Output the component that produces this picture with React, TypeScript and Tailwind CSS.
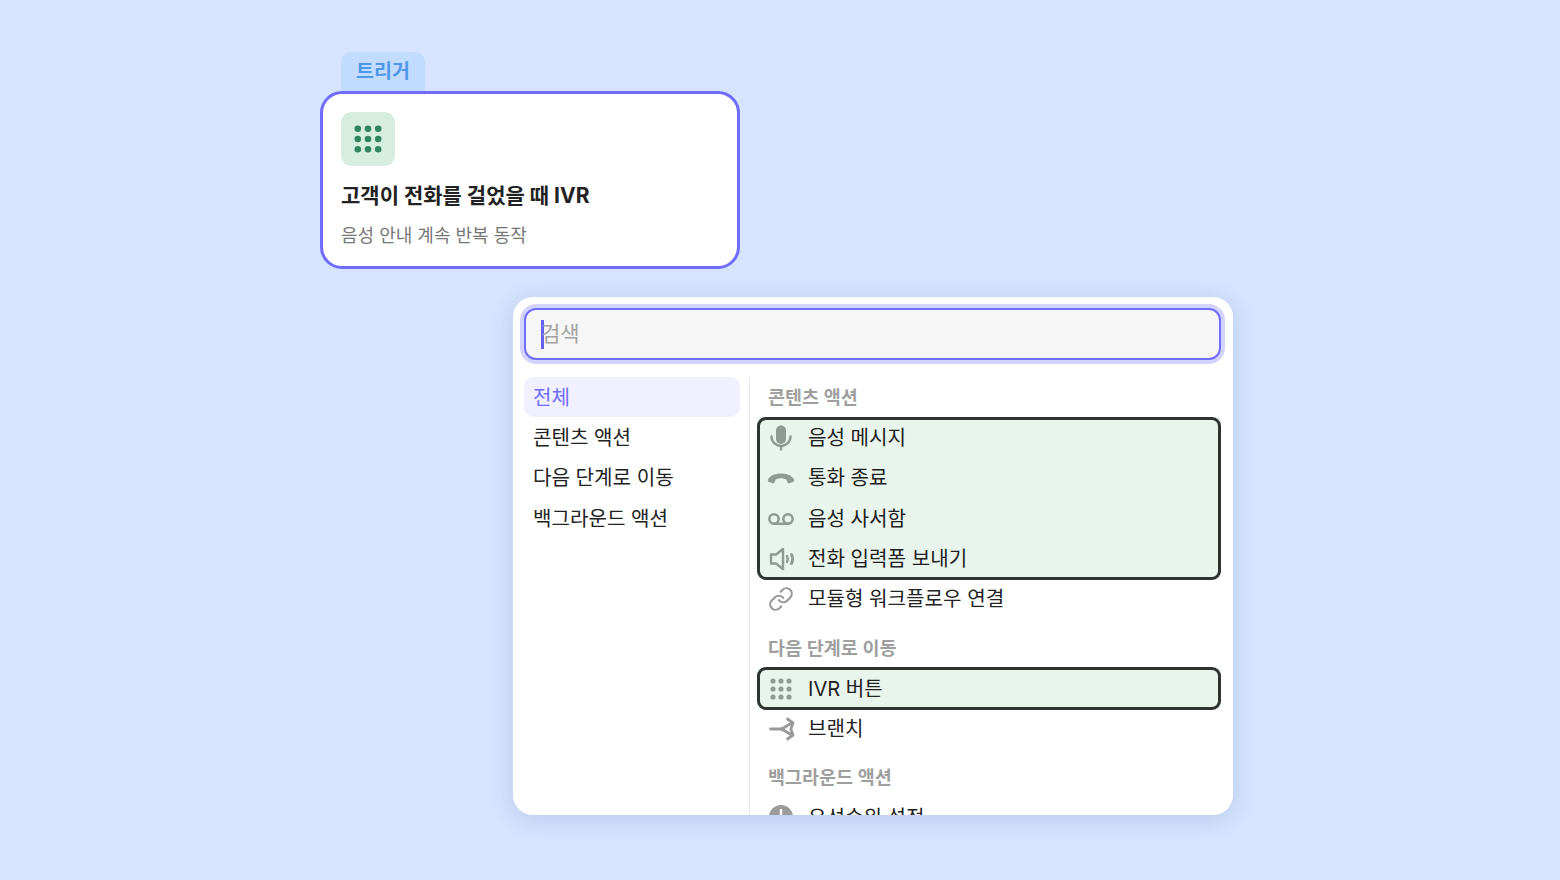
import type { ReactNode } from "react";
import { Link, Voicemail } from "lucide-react";

function Keypad({ className }: { className?: string }) {
    const dots = [];
    for (const cy of [3.8, 14, 24.2]) {
        for (const cx of [3.8, 14, 24.2]) {
            dots.push(<circle key={`${cx}-${cy}`} cx={cx} cy={cy} r="3.3" />);
        }
    }
    return (
        <svg viewBox="0 0 28 28" fill="currentColor" className={className}>
            {dots}
        </svg>
    );
}

function Mic() {
    return (
        <svg viewBox="0 0 28 28" className="h-7 w-7" fill="currentColor">
            <rect x="9" y="1.500" width="10" height="18.500" rx="5" />
            <path d="M4.500 12.500a9.500 9.500 0 0 0 19 0" fill="none" stroke="currentColor" strokeWidth="2.400" strokeLinecap="round" />
            <path d="M14 21.500v5" fill="none" stroke="currentColor" strokeWidth="2.400" />
        </svg>
    );
}

function HangUp() {
    return (
        <svg viewBox="0 1 28 28" className="h-7 w-7" fill="currentColor">
            <path d="M1 16.500C3 12.500 8 10.500 14 10.500S25 12.500 27 16.500C27.500 17.500 27 18.500 26 19L22.500 20.300C21.500 20.600 20.600 20 20.300 19L19.500 16.800C18 15.800 16 15.300 14 15.300S10 15.800 8.500 16.800L7.700 19C7.400 20 6.500 20.600 5.500 20.300L2 19C1 18.500 .5 17.500 1 16.500Z" />
        </svg>
    );
}

function Speaker() {
    return (
        <svg viewBox="0 0 28 28" className="h-7 w-7" fill="none" stroke="currentColor" strokeWidth="2.400" strokeLinejoin="round" strokeLinecap="round">
            <path d="M4 9.500h5L16 4v20l-7-5.500H4z" />
            <path d="M20 11c1 2 1 4 0 6" />
            <path d="M24.500 9.500c1.500 3 1.500 6 0 9" strokeWidth="2.800" />
        </svg>
    );
}

function Branch() {
    return (
        <svg viewBox="0 0 28 28" className="h-7 w-7" fill="none" stroke="currentColor" strokeWidth="2.800" strokeLinecap="round" strokeLinejoin="round">
            <path d="M3.500 14H14" />
            <path d="M14 14C17 13 20 10.500 25 8" />
            <path d="M14 14C17 15 20 17.500 25 20" />
            <path d="M20.500 4L26 8L24 13.500" />
            <path d="M20.500 24L26 20L24 14.500" />
        </svg>
    );
}

function ClockFilled() {
    return (
        <svg viewBox="0 0 28 28" className="h-7 w-7" fill="currentColor">
            <circle cx="14" cy="13" r="12" />
            <path d="M14 6v7" stroke="#fff" strokeWidth="2.400" strokeLinecap="round" />
        </svg>
    );
}

function Row({ icon, label, highlighted }: { icon: ReactNode; label: string; highlighted?: boolean }) {
    return (
        <div
            className={`flex h-[40.25px] items-center gap-[13px] pl-[10px] pt-[2px] text-[20.1px] text-[#222] ${
                highlighted ? "rounded-[3px] bg-[#e9f4ec]" : ""
            }`}
        >
            <span className={`flex h-7 w-7 shrink-0 items-center justify-center ${highlighted ? "text-[#8f9a94]" : "text-[#9a9a9a]"}`}>{icon}</span>
            <span>{label}</span>
        </div>
    );
}

function Heading({ children }: { children: ReactNode }) {
    return <div className="flex h-[40px] items-center pl-[11px] pt-[2px] text-[18.5px] font-semibold text-[#9f9f9f]">{children}</div>;
}

// dark frame drawn over a run of rows
function Frame({ className }: { className: string }) {
    return <div className={`pointer-events-none absolute inset-x-0 rounded-[9px] border-[3px] border-[#2f3331] ${className}`} />;
}

export default function App() {
    return (
        <div
            className="h-[880px] overflow-hidden bg-[#d6e4ff] pl-[320px] pt-[52px]"
            style={{ fontFamily: 'Inter, "Noto Sans CJK KR", sans-serif' }}
        >
            {/* trigger card */}
            <div className="w-[420px]">
                <div className="ml-[21px] flex h-[38.5px] w-[84px] items-center justify-center rounded-t-[10px] bg-[#c2dcff] text-[19.5px] font-semibold text-[#4e97ea]">
                    트리거
                </div>
                <div className="h-[178px] rounded-[22px] border-[3px] border-[#6f6cff] bg-white px-[18px] pt-[18px]">
                    <div className="flex h-[54px] w-[54px] items-center justify-center rounded-[10px] bg-[#d7eddf]">
                        <Keypad className="h-[28px] w-[28px] text-[#318660]" />
                    </div>
                    <div className="mt-[15.5px] text-[21px] leading-[30px] font-bold text-[#222]">고객이 전화를 걸었을 때 IVR</div>
                    <div className="mt-[11px] text-[18px] leading-[28px] text-[#777]">음성 안내 계속 반복 동작</div>
                </div>
            </div>

            {/* action picker */}
            <div className="mt-[28.5px] ml-[193px] h-[518px] w-[720px] overflow-hidden rounded-[20px] bg-white shadow-[0_4px_24px_rgba(30,60,120,0.16)]">
                <div className="pl-[11px] pt-[11px]">
                    <div className="flex h-[52px] w-[697px] items-center rounded-[12px] border-2 border-[#6f6cff] bg-[#f6f6f6] pl-[15px] text-[21px] text-[#a3a3a3] ring-4 ring-[#d3d3ff]">
                        <span className="mr-[-3px] h-[29px] w-[3px] bg-[#6561f5]" />
                        검색
                    </div>
                </div>
                <div className="mt-[17px] flex">
                    <div className="w-[236px] shrink-0 pl-[11px]">
                        <div className="flex h-[40px] w-[216px] items-center rounded-[10px] bg-[#f1f0ff] pl-[9px] pt-[2px] text-[20.1px] text-[#6f6cff]">전체</div>
                        {["콘텐츠 액션", "다음 단계로 이동", "백그라운드 액션"].map((label) => (
                            <div key={label} className="flex h-[40.25px] items-center pl-[9px] pt-[2px] text-[20.1px] text-[#222]">
                                {label}
                            </div>
                        ))}
                    </div>
                    <div className="h-[440px] w-[472px] border-l border-[#e8e8e8] pl-[7px]">
                        <div className="w-[464px]">
                            <Heading>콘텐츠 액션</Heading>
                            <div className="relative">
                                <Row highlighted icon={<Mic />} label="음성 메시지" />
                                <Row highlighted icon={<HangUp />} label="통화 종료" />
                                <Row highlighted icon={<Voicemail size={28} strokeWidth={2.2} />} label="음성 사서함" />
                                <Row highlighted icon={<Speaker />} label="전화 입력폼 보내기" />
                                <Frame className="top-0 -bottom-[1.5px]" />
                            </div>
                            <Row icon={<Link size={26} strokeWidth={2} />} label="모듈형 워크플로우 연결" />
                            <div className="mt-[9.5px]">
                                <Heading>다음 단계로 이동</Heading>
                            </div>
                            <div className="relative">
                                <Row highlighted icon={<Keypad className="h-[22px] w-[22px]" />} label="IVR 버튼" />
                                <Frame className="-top-px -bottom-[1.5px]" />
                            </div>
                            <Row icon={<Branch />} label="브랜치" />
                            <div className="mt-[8.5px]">
                                <Heading>백그라운드 액션</Heading>
                            </div>
                            <Row icon={<ClockFilled />} label="우선순위 설정" />
                        </div>
                    </div>
                </div>
            </div>
        </div>
    );
}
